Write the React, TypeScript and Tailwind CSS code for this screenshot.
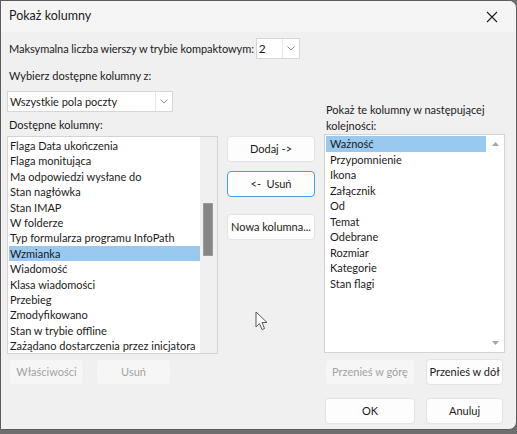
import React from 'react'

const available = [
  'Flaga Data ukończenia',
  'Flaga monitująca',
  'Ma odpowiedzi wysłane do',
  'Stan nagłówka',
  'Stan IMAP',
  'W folderze',
  'Typ formularza programu InfoPath',
  'Wzmianka',
  'Wiadomość',
  'Klasa wiadomości',
  'Przebieg',
  'Zmodyfikowano',
  'Stan w trybie offline',
  'Zażądano dostarczenia przez inicjatora',
]

const shown = [
  'Ważność',
  'Przypomnienie',
  'Ikona',
  'Załącznik',
  'Od',
  'Temat',
  'Odebrane',
  'Rozmiar',
  'Kategorie',
  'Stan flagi',
]

function Chevron() {
  return (
    <svg width="8" height="5" viewBox="0 0 8 5" fill="none">
      <path d="M0.5 0.5 L4 4 L7.5 0.5" stroke="#7a7a7a" strokeWidth="0.9" />
    </svg>
  )
}

function Button({
  label,
  width,
  disabled,
  focused,
}: {
  label: string
  width: string
  disabled?: boolean
  focused?: boolean
}) {
  const base = 'h-[26px] rounded-[4px] flex items-center justify-center text-[11px] leading-[16px] whitespace-pre border'
  if (disabled) {
    return <div className={`${base} ${width} bg-[#f6f6f6] border-[#f0f0f0] text-[#a3a3a3]`}>{label}</div>
  }
  return (
    <div
      className={`${base} ${width} bg-[#fdfdfd] text-[#1b1b1b] ${
        focused ? 'border-[#4b9be0]' : 'border-[#e3e3e3]'
      }`}
    >
      {label}
    </div>
  )
}

export default function App() {
  return (
    <div
      className="w-[517px] h-[434px] bg-[#6e6e6e] overflow-hidden"
      style={{ fontFamily: 'Lato, "Noto Sans", sans-serif' }}
    >
      <div className="relative w-[517px] h-[430px] border border-[#5c5c5c] rounded-tr-[8px] rounded-br-[8px] overflow-hidden bg-[#f0f0f0] text-[#1b1b1b]">
        {/* title bar */}
        <div className="h-[31px] bg-[#f5f5f5] flex items-center justify-between pl-[8px] pr-[18px]">
          <span className="text-[12.5px]">Pokaż kolumny</span>
          <svg width="12" height="12" viewBox="0 0 12 12">
            <path d="M1 1 L11 11 M11 1 L1 11" stroke="#1b1b1b" strokeWidth="1.1" />
          </svg>
        </div>

        <div className="pl-[6px] pt-[6px] text-[11px] leading-[16px]">
          {/* compact rows */}
          <div className="flex items-center h-[21px]">
            <span className="ml-[2px] mr-[2px] whitespace-nowrap tracking-[-0.06px]">
              Maksymalna liczba wierszy w trybie kompaktowym:
            </span>
            <div className="w-[44px] h-[21px] bg-white border border-[#d6d6d6] flex items-center">
              <span className="flex-1 pl-[2px] text-[12px]">2</span>
              <div className="w-[17px] h-full border-l border-[#e6e6e6] flex items-center justify-center">
                <Chevron />
              </div>
            </div>
          </div>
          <div className="h-[16px] mt-[9px] ml-[2px]">Wybierz dostępne kolumny z:</div>

          {/* three columns */}
          <div className="flex mt-[7px]">
            {/* left */}
            <div className="w-[211px] flex flex-col">
              <div className="w-[166px] h-[21px] bg-white border border-[#d6d6d6] flex items-center">
                <span className="flex-1 pl-[2px] whitespace-nowrap">Wszystkie pola poczty</span>
                <div className="w-[17px] h-full border-l border-[#e6e6e6] flex items-center justify-center">
                  <Chevron />
                </div>
              </div>
              <div className="h-[16px] mt-[5px] ml-[2px]">Dostępne kolumny:</div>
              <div className="mt-[3px] h-[218px] border border-[#d3d3d3] bg-white flex">
                <div className="flex-1 pt-[1px] pl-[1px] overflow-hidden">
                  {available.map((item) => (
                    <div
                      key={item}
                      className={`h-[15.4px] leading-[15.4px] pl-[1px] whitespace-nowrap ${
                        item === 'Wzmianka' ? 'bg-[#99c9ef]' : ''
                      }`}
                    >
                      {item}
                    </div>
                  ))}
                </div>
                <div className="w-[17px] bg-[#f0f0f0] relative">
                  <div className="absolute left-[3px] top-[66px] w-[10px] h-[53px] bg-[#868686] border border-[#9a9a9a]" />
                </div>
              </div>
              <div className="flex gap-[12px] mt-[5px] ml-[2px]">
                <Button label="Właściwości" width="w-[75px]" disabled />
                <Button label="Usuń" width="w-[75px]" disabled />
              </div>
            </div>

            {/* middle */}
            <div className="ml-[9px] w-[88px] flex flex-col mt-[45px]">
              <Button label="Dodaj ->" width="w-[88px]" />
              <div className="mt-[9px]">
                <Button label="<-  Usuń" width="w-[88px]" focused />
              </div>
              <div className="mt-[17px]">
                <Button label="Nowa kolumna..." width="w-[88px]" />
              </div>
            </div>

            {/* right */}
            <div className="ml-[9px] w-[181px] flex flex-col mt-[11px]">
              <div className="ml-[2px] whitespace-nowrap">
                Pokaż te kolumny w następującej
                <br />
                kolejności:
              </div>
              <div className="h-[219px] border border-[#d3d3d3] bg-white flex">
                <div className="flex-1 pt-[1px] pl-[1px] overflow-hidden">
                  {shown.map((item) => (
                    <div
                      key={item}
                      className={`h-[15.5px] leading-[15.5px] pl-[4px] ${
                        item === 'Ważność' ? 'bg-[#99c9ef]' : ''
                      }`}
                    >
                      {item}
                    </div>
                  ))}
                </div>
                <div className="w-[18px] flex flex-col items-center justify-between py-[7px]">
                  <svg width="7" height="4" viewBox="0 0 7 4">
                    <path d="M0 4 L3.5 0 L7 4 Z" fill="#a6a6a6" />
                  </svg>
                  <svg width="7" height="4" viewBox="0 0 7 4">
                    <path d="M0 0 L3.5 4 L7 0 Z" fill="#a6a6a6" />
                  </svg>
                </div>
              </div>
              <div className="flex gap-[11px] mt-[6px] ml-[1px]">
                <Button label="Przenieś w górę" width="w-[90px]" disabled />
                <Button label="Przenieś w dół" width="w-[77px]" />
              </div>
              <div className="flex gap-[11px] mt-[13px] ml-[1px]">
                <Button label="OK" width="w-[90px]" />
                <Button label="Anuluj" width="w-[77px]" />
              </div>
            </div>
          </div>
        </div>

        {/* mouse pointer */}
        <svg className="absolute left-[254px] top-[310px]" width="14" height="21" viewBox="0 0 14 21">
          <path
            d="M1 1 L1 16 L4.5 12.5 L7 18.5 L9.5 17.5 L7 11.5 L12 11.5 Z"
            fill="#ffffff"
            stroke="#555"
            strokeWidth="1"
            strokeLinejoin="round"
          />
        </svg>
      </div>
    </div>
  )
}
